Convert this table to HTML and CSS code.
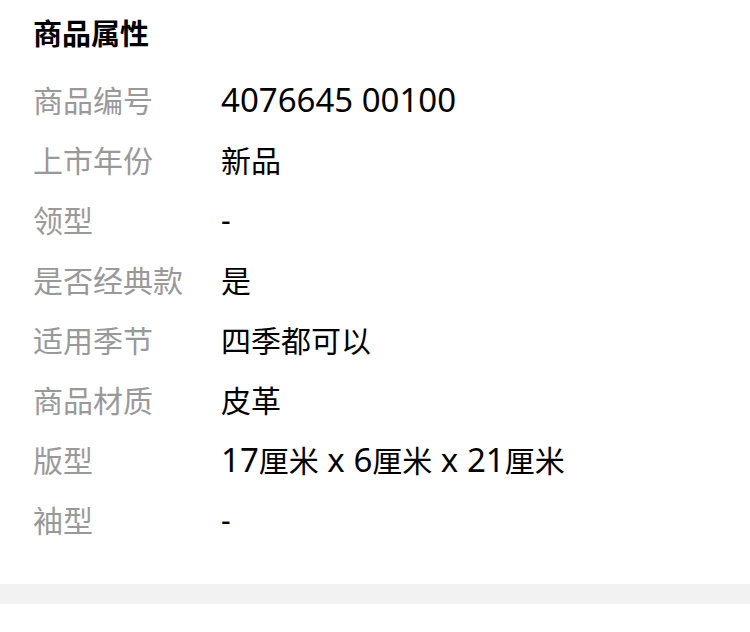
FILE: index.html
```html
<!DOCTYPE html>
<html lang="zh-CN">
<head>
    <meta charset="UTF-8">
    <meta name="viewport" content="width=device-width, initial-scale=1.0">
    <title>商品属性</title>
    <link rel="stylesheet" href="styles.css">
</head>
<body>

<!-- 商品属性 -->
<div class="attr-section">
    <h2 class="attr-title">商品属性</h2>
    <div class="attr-list">
        <div class="attr-row"><span class="attr-label">商品编号</span><span class="attr-value"><span class="num">4076645 00100</span></span></div>
        <div class="attr-row"><span class="attr-label">上市年份</span><span class="attr-value">新品</span></div>
        <div class="attr-row"><span class="attr-label">领型</span><span class="attr-value">-</span></div>
        <div class="attr-row"><span class="attr-label">是否经典款</span><span class="attr-value">是</span></div>
        <div class="attr-row"><span class="attr-label">适用季节</span><span class="attr-value">四季都可以</span></div>
        <div class="attr-row"><span class="attr-label">商品材质</span><span class="attr-value">皮革</span></div>
        <div class="attr-row"><span class="attr-label">版型</span><span class="attr-value"><span class="num">17</span>厘米<span class="num"> x 6</span>厘米<span class="num"> x 21</span>厘米</span></div>
        <div class="attr-row"><span class="attr-label">袖型</span><span class="attr-value">-</span></div>
    </div>
</div>

<div class="divider"></div>

</body>
</html>
```

FILE: styles.css
```css
body {
    margin: 0;
    background-color: #fff;
    font-family: "Noto Sans", "Noto Sans CJK SC", sans-serif;
    color: #000;
}
.attr-section {
    padding: 14px 33px 35px;
}
.attr-title {
    margin: 0 0 15px;
    font-size: 29px;
    line-height: 40px;
    font-weight: bold;
}
.attr-row {
    display: flex;
    align-items: center;
    height: 60px;
    font-size: 30px;
}
.attr-label {
    width: 188px;
    flex-shrink: 0;
    color: #999;
}
.attr-value {
    color: #000;
}
.attr-value .num {
    font-size: 33px;
    white-space: pre;
}
.divider {
    height: 20px;
    background-color: #f2f2f2;
}
```
